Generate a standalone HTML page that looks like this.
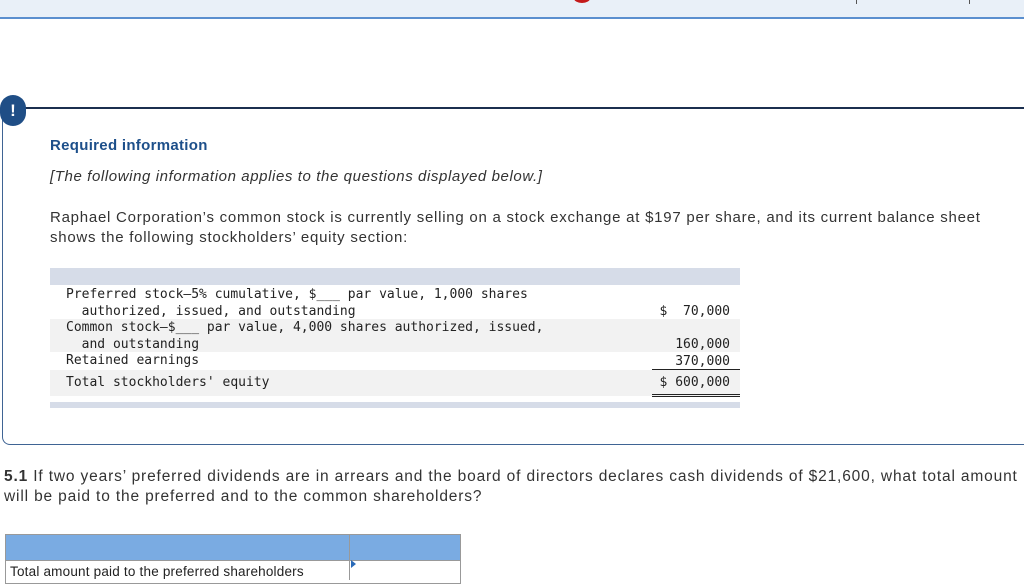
<!DOCTYPE html>
<html><head><style>
*{margin:0;padding:0;box-sizing:border-box}
body{width:1024px;height:576px;overflow:hidden;background:#fff;font-family:"Liberation Sans",sans-serif;position:relative;color:#333}
.abs{position:absolute}
.mono{font-family:"DejaVu Sans Mono","Liberation Mono",monospace;font-size:13px;color:#222;white-space:pre;line-height:16.6px}
</style></head><body>
<div class="abs" style="left:0;top:0;width:1024px;height:19px;background:#e9f0f8;border-bottom:2px solid #5b8fcf"></div>
<div class="abs" style="left:574px;top:-6px;width:16px;height:9px;border-radius:50%;background:#c41a1a"></div>
<div class="abs" style="left:856px;top:0;width:1px;height:4px;background:#555"></div>
<div class="abs" style="left:969px;top:0;width:1px;height:4px;background:#555"></div>

<div class="abs" style="left:2px;top:107px;width:1030px;height:338px;border:1px solid #3f6494;border-top:2px solid #1b2f4f;border-radius:0 0 0 8px;border-right:none"></div>
<div class="abs" style="left:0;top:95px;width:26px;height:31px;border-radius:13px;background:#1f4e86;color:#fff;font-weight:bold;font-size:17px;text-align:center;line-height:31px">!</div>

<div class="abs" style="left:50px;top:137px;font-size:15px;font-weight:bold;color:#1d4f8a;letter-spacing:0.3px">Required information</div>
<div class="abs" style="left:50px;top:168px;font-size:15px;font-style:italic;color:#333;letter-spacing:0.6px">[The following information applies to the questions displayed below.]</div>
<div class="abs" style="left:50px;top:208px;font-size:15px;line-height:20px;color:#333;width:960px;letter-spacing:0.75px">Raphael Corporation’s common stock is currently selling on a stock exchange at $197 per share, and its current balance sheet shows the following stockholders’ equity section:</div>

<div class="abs" style="left:50px;top:268px;width:690px;height:17px;background:#d6dce8"></div>
<div class="abs" style="left:50px;top:319px;width:690px;height:33px;background:#f2f2f2"></div>
<div class="abs" style="left:50px;top:370px;width:690px;height:26px;background:#f2f2f2"></div>
<div class="abs" style="left:50px;top:402px;width:690px;height:6px;background:#d6dce8"></div>
<div class="abs mono" style="left:66px;top:287px">Preferred stock—5% cumulative, $___ par value, 1,000 shares
  authorized, issued, and outstanding
Common stock—$___ par value, 4,000 shares authorized, issued,
  and outstanding
Retained earnings</div>
<div class="abs mono" style="left:66px;top:375px">Total stockholders' equity</div>
<div class="abs mono" style="left:640px;top:304px;text-align:right;width:90px">$  70,000

160,000
370,000</div>
<div class="abs" style="left:652px;top:369px;width:88px;height:1px;background:#222"></div>
<div class="abs mono" style="left:640px;top:375px;text-align:right;width:90px">$ 600,000</div>
<div class="abs" style="left:652px;top:394px;width:88px;height:3px;border-top:1px solid #222;border-bottom:1px solid #222"></div>

<div class="abs" style="left:4px;top:467px;font-size:15.5px;line-height:20px;color:#333;width:1020px;letter-spacing:0.85px"><b>5.1</b> If two years’ preferred dividends are in arrears and the board of directors declares cash dividends of $21,600, what total amount will be paid to the preferred and to the common shareholders?</div>

<div class="abs" style="left:5px;top:534px;width:456px;height:50px;border:1px solid #999"></div>
<div class="abs" style="left:6px;top:535px;width:454px;height:26px;background:#7aabe2;border-bottom:1px solid #999"></div>
<div class="abs" style="left:349px;top:535px;width:1px;height:45px;background:#999"></div>
<div class="abs" style="left:10px;top:564px;font-size:13.5px;color:#222;letter-spacing:0.2px">Total amount paid to the preferred shareholders</div>
<div class="abs" style="left:351px;top:560px;width:0;height:0;border-top:4px solid transparent;border-bottom:4px solid transparent;border-left:5px solid #2a6ab8"></div>
</body></html>
